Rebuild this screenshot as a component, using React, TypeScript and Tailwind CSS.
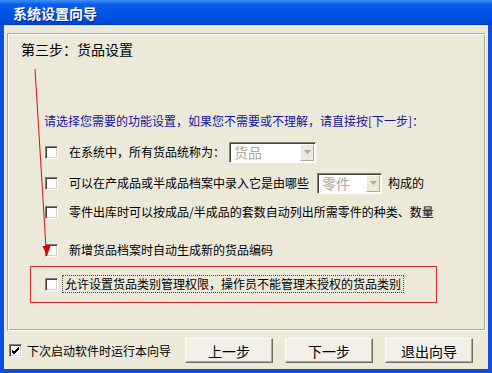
import React from "react";

const CheckBox = ({ checked }: { checked?: boolean }) => (
  <span className="relative flex h-[13px] w-[13px] shrink-0 items-center justify-center border border-t-[#808080] border-l-[#808080] border-r-white border-b-white bg-white shadow-[inset_1px_1px_0_#404040,inset_-1px_-1px_0_#d4d0c8]">
    {checked && (
      <svg width="9" height="9" viewBox="0 0 9 9">
        <path d="M1 4 L3 6 L8 1 M1 5 L3 7 L8 2 M1 6 L3 8 L8 3" stroke="#000" strokeWidth="1" fill="none" />
      </svg>
    )}
  </span>
);

const Combo = ({ value, className }: { value: string; className: string }) => (
  <div
    className={
      "flex h-[21px] items-center border border-t-[#808080] border-l-[#808080] border-r-white border-b-white bg-white shadow-[inset_1px_1px_0_#404040] " +
      className
    }
  >
    <span className="flex-1 pl-[4px] text-[14px] leading-none text-[#aca899]">{value}</span>
    <span className="mr-[1px] flex h-[17px] w-[14px] items-center justify-center border border-t-white border-l-white border-r-[#aca899] border-b-[#aca899] bg-[#ece9d8]">
      <svg width="7" height="4" viewBox="0 0 7 4">
        <path d="M0 0 H7 L3.5 4 Z" fill="#aca899" />
      </svg>
    </span>
  </div>
);

const Row = ({ children, className }: { children: React.ReactNode; className: string }) => (
  <div className={"flex h-[24px] items-center pl-[37px] text-[12px] leading-none text-black " + className}>
    {children}
  </div>
);

const XpButton = ({ label, className }: { label: string; className: string }) => (
  <button
    className={
      "flex h-[25px] items-center justify-center border border-t-white border-l-white border-r-[#716f64] border-b-[#716f64] bg-[#f2f0e6] text-[14px] leading-none text-black shadow-[inset_-1px_-1px_0_#aca899] " +
      className
    }
  >
    {label}
  </button>
);

export default function App() {
  return (
    <div className="relative flex h-[373px] w-[492px] flex-col overflow-hidden bg-[#ece9d8] font-['Noto_Sans_CJK_SC','Liberation_Sans',sans-serif]">
      <div className="flex h-[25px] shrink-0 items-center bg-[linear-gradient(to_bottom,#3d8ff5_0%,#0a5de9_18%,#0054e3_55%,#0049d6_90%,#003cb8_100%)] pl-[13px]">
        <span className="text-[14px] font-bold leading-none text-white [text-shadow:1px_1px_0_#0a2a80]">
          系统设置向导
        </span>
      </div>

      <div className="flex flex-1 flex-col border-x-4 border-b-4 border-[#0b50dc]">
        {/* main group panel */}
        <div className="ml-[3px] mr-[2px] mt-[8px] h-[298px] border border-t-[#aca899] border-l-[#aca899] border-r-white border-b-white shadow-[inset_1px_1px_0_white,inset_-1px_-1px_0_#aca899]">
          <div className="flex h-[28px] items-center pl-[13px] pt-[1px] text-[14px] leading-none text-black">
            第三步：货品设置
          </div>

          <div className="mt-[49px] flex h-[20px] items-center pl-[36px] text-[12px] leading-none text-[#1414a0]">
            请选择您需要的功能设置，如果您不需要或不理解，请直接按[下一步]：
          </div>

          <Row className="mt-[9px]">
            <CheckBox />
            <span className="ml-[11px]">在系统中，所有货品统称为：</span>
            <Combo value="货品" className="ml-[4px] w-[87px]" />
          </Row>

          <Row className="mt-[7px]">
            <CheckBox />
            <span className="ml-[11px]">可以在产成品或半成品档案中录入它是由哪些</span>
            <Combo value="零件" className="ml-[8px] w-[65px]" />
            <span className="ml-[6px]">构成的</span>
          </Row>

          <Row className="mt-[5px]">
            <CheckBox />
            <span className="ml-[11px]">零件出库时可以按成品/半成品的套数自动列出所需零件的种类、数量</span>
          </Row>

          <Row className="mt-[14px]">
            <CheckBox />
            <span className="ml-[11px]">新增货品档案时自动生成新的货品编码</span>
          </Row>

          <div className="ml-[22px] mt-[4px] flex h-[37px] w-[407px] items-center border border-[#d42828] pb-[1px] pl-[14px] text-[12px] leading-none text-black">
            <CheckBox />
            <span className="ml-[4px] border border-dotted border-[#444] px-[2px] py-[2px]">
              允许设置货品类别管理权限，操作员不能管理未授权的货品类别
            </span>
          </div>
        </div>

        {/* bottom bar */}
        <div className="mt-[7px] flex items-center pl-[5px] pr-[15px]">
          <CheckBox checked />
          <span className="ml-[5px] text-[12px] leading-none text-black">下次启动软件时运行本向导</span>
          <div className="ml-auto flex gap-[12px]">
            <XpButton label="上一步" className="w-[88px]" />
            <XpButton label="下一步" className="w-[88px]" />
            <XpButton label="退出向导" className="w-[88px]" />
          </div>
        </div>
      </div>

      {/* red annotation arrow */}
      <svg className="pointer-events-none absolute left-0 top-0" width="492" height="373">
        <line x1="35" y1="69" x2="46" y2="248" stroke="#d81010" strokeWidth="1" />
        <path d="M42.5 246 L50.5 246 L47 256 Z" fill="#e00000" />
      </svg>
    </div>
  );
}
